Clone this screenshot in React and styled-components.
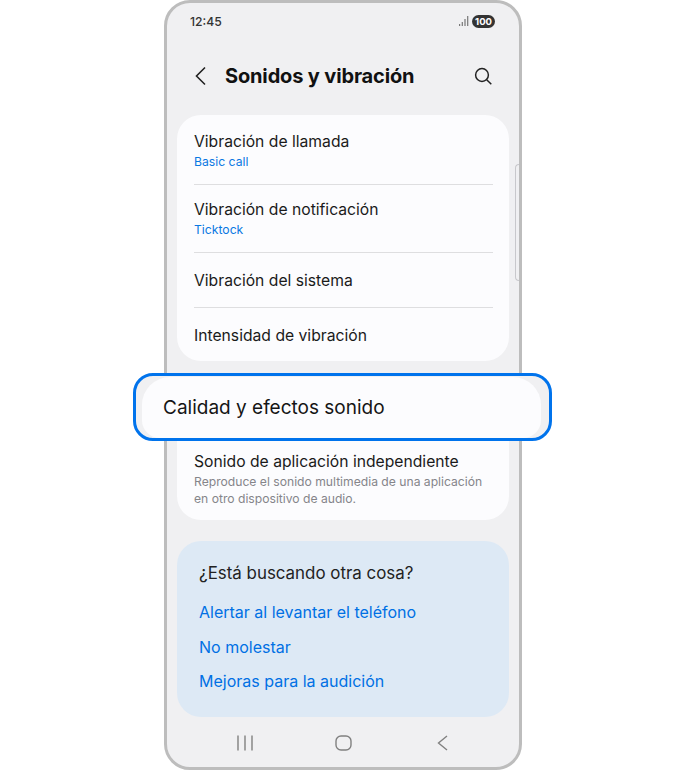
import React from 'react'
import styled, { createGlobalStyle } from 'styled-components'

const Global = createGlobalStyle`
  html, body {
    margin: 0;
    padding: 0;
    background: #fff;
  }
  body {
    font-family: Inter, "Noto Sans", "Liberation Sans", sans-serif;
    color: #111;
  }
`
const Page = styled.div`
  width: 684px;
  height: 770px;
  overflow: hidden;
`
const Phone = styled.section`
  position: relative;
  box-sizing: border-box;
  width: 358px;
  height: 770px;
  margin-left: 164px;
  border: 3px solid #bdbdbd;
  border-radius: 26px;
  background: #f0f0f2;
  padding: 0 10px;
`
const Status = styled.div`
  display: flex;
  align-items: center;
  justify-content: space-between;
  height: 14px;
  margin-top: 11px;
  padding: 0 14px 0 13px;
  font-size: 12.2px;
  font-weight: 500;
  color: #333;
`
const Signal = styled.div`
  display: flex;
  align-items: center;
  gap: 3px;
`
const Battery = styled.span`
  display: inline-block;
  background: #333;
  color: #fff;
  font-size: 9.5px;
  font-weight: 700;
  line-height: 13px;
  height: 13px;
  width: 23px;
  text-align: center;
  border-radius: 7px;
`
const Header = styled.header`
  display: flex;
  align-items: center;
  height: 36px;
  margin-top: 30px;
  padding: 0 16px 0 17px;
`
const Title = styled.h1`
  flex: 1;
  margin: 0 0 0 17px;
  font-size: 20px;
  font-weight: 700;
  letter-spacing: -0.15px;
  color: #111;
`
const Card = styled.div`
  background: #fcfcfe;
  border-radius: 24px;
  padding: 0 16px 0 17px;
`
const TopCard = styled(Card)`
  margin-top: 21px;
  height: 246px;
  box-sizing: border-box;
`
const SoundCard = styled(Card)`
  margin-top: 14px;
  height: 145px;
  box-sizing: border-box;
  border-radius: 0 0 24px 24px;
`
const Row = styled.div`
  box-sizing: border-box;
  height: ${(p) => p.$h}px;
  padding-top: ${(p) => p.$top}px;
  border-bottom: ${(p) => (p.$line ? '1px solid #dedee0' : 'none')};
`
const RowTitle = styled.div`
  font-size: 15.7px;
  line-height: 20px;
  color: #1a1a1a;
`
const RowValue = styled.div`
  font-size: 12.2px;
  line-height: 16px;
  margin-top: 2px;
  color: #0a78e2;
`
const RowHint = styled.div`
  font-size: 12.15px;
  line-height: 16.5px;
  margin-top: 2px;
  color: #85858a;
`
const HighlightSlot = styled.div`
  position: relative;
  height: 65px;
`
const Highlight = styled.div`
  position: absolute;
  left: -61px;
  right: -59px;
  top: -2px;
  height: 68px;
  box-sizing: border-box;
  border: 3px solid #0073ec;
  border-radius: 20px;
  background: #f0f0f2;
  padding: 1px 8px 0 6px;
  overflow: hidden;
`
const HighlightInner = styled.div`
  height: 100%;
  border-radius: 28px 28px 18px 18px;
  background: #fcfcfe;
  padding: 0 21px;
  display: flex;
  align-items: center;
  font-size: 19px;
  color: #151515;
`
const FindCard = styled.div`
  margin-top: 21px;
  height: 176px;
  box-sizing: border-box;
  background: #dde9f5;
  border-radius: 24px;
  padding: 22px 22px;
`
const FindTitle = styled.div`
  font-size: 16.9px;
  line-height: 20px;
  color: #222;
  margin-bottom: 10px;
`
const FindLink = styled.a`
  display: block;
  font-size: 16px;
  line-height: 20px;
  padding: 9px 0 5.6px;
  color: #0070e4;
`
const Nav = styled.nav`
  display: grid;
  grid-template-columns: 98px 102px auto;
  align-items: center;
  height: 52px;
  padding-left: 60px;
`
const Scroll = styled.div`
  position: absolute;
  right: 0;
  top: 161px;
  width: 4px;
  height: 117px;
  box-sizing: border-box;
  border: 1px solid #c8c8cc;
  border-right: none;
  border-radius: 5px 0 0 5px;
`

const Back = () => (
  <svg width="14" height="20" viewBox="0 0 14 20" fill="none" stroke="#222" strokeWidth="1.6">
    <path d="M11 1.5 L2.5 10 L11 18.5" />
  </svg>
)
const Search = () => (
  <svg width="20" height="20" viewBox="0 0 20 20" fill="none" stroke="#222" strokeWidth="1.5">
    <circle cx="9" cy="9" r="6.4" />
    <path d="M13.7 13.7 L18.3 18.3" />
  </svg>
)
const Bars = () => (
  <svg width="10" height="10" viewBox="0 0 10 10" fill="#777">
    <rect x="0" y="8" width="1.2" height="2" />
    <rect x="2.7" y="6" width="1.2" height="4" />
    <rect x="5.4" y="3" width="1.2" height="7" />
    <rect x="8.1" y="0" width="1.2" height="10" />
  </svg>
)
const NavRecents = () => (
  <svg width="16" height="16" viewBox="0 0 16 16" stroke="#808080" strokeWidth="1.4">
    <path d="M1 0.5 V15.5 M8 0.5 V15.5 M15 0.5 V15.5" />
  </svg>
)
const NavHome = () => (
  <svg width="17" height="16" viewBox="0 0 17 16" fill="none" stroke="#808080" strokeWidth="1.4">
    <rect x="1" y="1" width="15" height="14" rx="5" />
  </svg>
)
const NavBack = () => (
  <svg width="11" height="16" viewBox="0 0 11 16" fill="none" stroke="#808080" strokeWidth="1.4">
    <path d="M10 1 L1.5 8 L10 15" />
  </svg>
)

export default function App() {
  return (
    <Page>
      <Global />
      <Phone>
        <Status>
          <span>12:45</span>
          <Signal>
            <Bars />
            <Battery>100</Battery>
          </Signal>
        </Status>
        <Header>
          <Back />
          <Title>Sonidos y vibración</Title>
          <Search />
        </Header>
        <TopCard>
          <Row $h={70} $top={17} $line>
            <RowTitle>Vibración de llamada</RowTitle>
            <RowValue>Basic call</RowValue>
          </Row>
          <Row $h={68} $top={15} $line>
            <RowTitle>Vibración de notificación</RowTitle>
            <RowValue>Ticktock</RowValue>
          </Row>
          <Row $h={55} $top={18} $line>
            <RowTitle>Vibración del sistema</RowTitle>
          </Row>
          <Row $h={53} $top={18}>
            <RowTitle>Intensidad de vibración</RowTitle>
          </Row>
        </TopCard>
        <SoundCard>
          <HighlightSlot>
            <Highlight>
              <HighlightInner>Calidad y efectos sonido</HighlightInner>
            </Highlight>
          </HighlightSlot>
          <Row $h={80} $top={12}>
            <RowTitle>Sonido de aplicación independiente</RowTitle>
            <RowHint>
              Reproduce el sonido multimedia de una aplicación
              <br />
              en otro dispositivo de audio.
            </RowHint>
          </Row>
        </SoundCard>
        <FindCard>
          <FindTitle>¿Está buscando otra cosa?</FindTitle>
          <FindLink>Alertar al levantar el teléfono</FindLink>
          <FindLink>No molestar</FindLink>
          <FindLink>Mejoras para la audición</FindLink>
        </FindCard>
        <Nav>
          <NavRecents />
          <NavHome />
          <NavBack />
        </Nav>
        <Scroll />
      </Phone>
    </Page>
  )
}
